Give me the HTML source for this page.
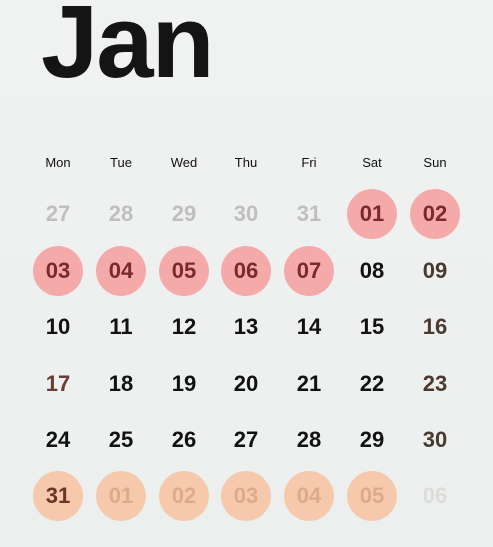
<!DOCTYPE html>
<html><head><style>
body{margin:0;width:493px;height:547px;background:linear-gradient(#f0f2f1,#ebefed);font-family:"Liberation Sans",sans-serif;position:relative;overflow:hidden}
.t{position:absolute;left:41px;top:-17px;font-size:103px;font-weight:bold;letter-spacing:-2px;color:#141414}
.c{position:absolute;width:50px;height:50px;margin:-25px 0 0 -25px;border-radius:50%;display:flex;align-items:center;justify-content:center;font-weight:bold;font-size:22px}
.w{font-weight:normal;font-size:13px;color:#111}
.p{background:#f4aaa9;color:#7a2a2c}
.o{background:#f6c9ac}
</style></head><body>
<div class="t">Jan</div>
<div id="g"></div>
<script>
var xs=[58,121,184,246,309,372,435],ys=[214,271,327,384,440,496];
var w=["Mon","Tue","Wed","Thu","Fri","Sat","Sun"],h="";
w.forEach((d,i)=>h+=`<div class="c w" style="left:${xs[i]}px;top:162px">${d}</div>`);
var cells=[
[["27","g"],["28","g"],["29","g"],["30","g"],["31","g"],["01","p"],["02","p"]],
[["03","p"],["04","p"],["05","p"],["06","p"],["07","p"],["08","k"],["09","b"]],
[["10","k"],["11","k"],["12","k"],["13","k"],["14","k"],["15","k"],["16","b"]],
[["17","r"],["18","k"],["19","k"],["20","k"],["21","k"],["22","k"],["23","b"]],
[["24","k"],["25","k"],["26","k"],["27","k"],["28","k"],["29","k"],["30","b"]],
[["31","o1"],["01","o"],["02","o"],["03","o"],["04","o"],["05","o"],["06","l"]]];
var col={g:"color:#bfc0bd",k:"color:#111",b:"color:#4a3a2e",r:"color:#6b3a32",o1:"color:#6b3424",o:"color:#deaa8c",l:"color:#dcdcd8"};
cells.forEach((r,j)=>r.forEach((c,i)=>{var cl=c[1]=="p"?"p":(c[1][0]=="o"?"o":"");h+=`<div class="c ${cl}" style="left:${xs[i]}px;top:${ys[j]}px;${col[c[1]]||""}">${c[0]}</div>`}));
document.getElementById("g").innerHTML=h;
</script>
</body></html>
